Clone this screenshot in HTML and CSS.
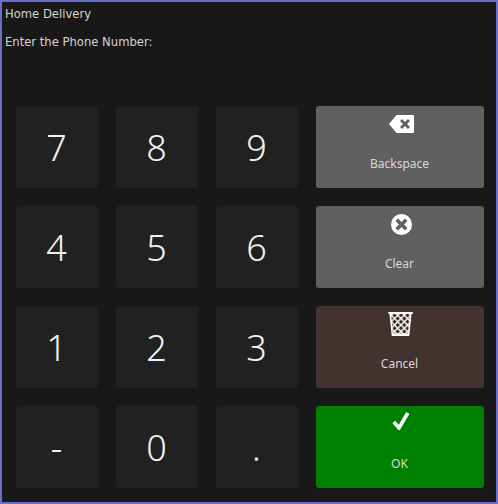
FILE: index.html
```html
<!DOCTYPE html>
<html lang="en">
<head>
<meta charset="utf-8">
<title>Home Delivery</title>
<link rel="stylesheet" href="styles.css">
</head>
<body>
<main class="dialog">
  <h1 class="title">Home Delivery</h1>
  <p class="prompt">Enter the Phone Number:</p>
  <div class="pad">
    <button class="key">7</button>
    <button class="key">8</button>
    <button class="key">9</button>
    <button class="action grey">
      <svg class="icon back" viewBox="0 0 25 18"><path fill="#fff" fill-rule="evenodd" d="M7.500 0H24a1 1 0 0 1 1 1V17a1 1 0 0 1-1 1H7.500L0 9ZM11 6 14 9 11 12 13 14 16 11 19 14 21 12 18 9 21 6 19 4 16 7 13 4Z"/></svg>
      <span>Backspace</span>
    </button>
    <button class="key">4</button>
    <button class="key">5</button>
    <button class="key">6</button>
    <button class="action grey">
      <svg class="icon clear" viewBox="0 0 21 21"><path fill="#fff" fill-rule="evenodd" d="M10.500 0a10.500 10.500 0 1 0 0 21 10.500 10.500 0 0 0 0-21ZM7 4.500 10.500 8 14 4.500 16.500 7 13 10.500 16.500 14 14 16.500 10.500 13 7 16.500 4.500 14 8 10.500 4.500 7Z"/></svg>
      <span>Clear</span>
    </button>
    <button class="key">1</button>
    <button class="key">2</button>
    <button class="key">3</button>
    <button class="action brown">
      <svg class="icon bin" viewBox="0 0 25 24">
        <defs>
          <pattern id="mesh" width="4.600" height="4.600" patternUnits="userSpaceOnUse" patternTransform="rotate(45)">
            <rect width="4.600" height="4.600" fill="#fff"/>
            <rect x="0.700" y="0.700" width="3.200" height="3.200" fill="#3a2a28"/>
          </pattern>
        </defs>
        <path fill="url(#mesh)" d="M2 1H23L21 23H4Z"/>
        <path fill="#fff" d="M0 0H25L24.500 2H0.500ZM1.500 2H3.200L5 23H3.600ZM21.800 2H23.500L21.400 23H20ZM3.800 21.500H21.200V24H3.800Z"/>
      </svg>
      <span>Cancel</span>
    </button>
    <button class="key">-</button>
    <button class="key">0</button>
    <button class="key">.</button>
    <button class="action green">
      <svg class="icon check" viewBox="0 0 18 18"><path fill="none" stroke="#fff" stroke-width="3.600" d="M1.800 10 7 16 15.800 1"/></svg>
      <span>OK</span>
    </button>
  </div>
</main>
</body>
</html>
```
FILE: styles.css
```css
* { box-sizing: border-box; }
html, body { margin: 0; padding: 0; }
body { background: #181818; }
.dialog {
  width: 498px;
  height: 504px;
  border: 2px solid #6a6fcb;
  background: #181818;
  color: #d4d4d4;
  font-family: "DejaVu Sans", sans-serif;
  font-size: 11.6px;
  line-height: 14px;
  opacity: 0.999;
}
.title { margin: 0; padding: 5px 0 0 3px; font: inherit; }
.prompt { margin: 14px 0 0 3px; }
.pad {
  display: grid;
  grid-template-columns: 82px 82px 82px 168px;
  grid-auto-rows: 82px;
  gap: 18px;
  margin: 57px 0 0 14px;
}
button {
  border: 0;
  border-radius: 3px;
  padding: 0;
  font-family: "Noto Sans", "Open Sans", sans-serif;
  color: #d8d8d8;
}
.key {
  background: #212121;
  font-size: 36px;
  font-weight: 300;
  font-family: "Noto Sans", sans-serif;
  color: #f2f2f2;
  padding-right: 1px;
}
.action {
  display: flex;
  flex-direction: column;
  align-items: center;
  position: relative;
  font-size: 12px;
  line-height: 16px;
  padding: 50px 1px 0 0;
}
.action span { display: block; }
.icon { position: absolute; }
.grey { background: #606060; }
.brown { background: #433230; }
.green { background: #008000; }
.back { left: 73px; top: 9px; width: 25px; height: 18px; }
.clear { left: 75px; top: 8px; width: 21px; height: 21px; }
.bin { left: 72px; top: 6px; width: 25px; height: 24px; }
.check { left: 76px; top: 6px; width: 18px; height: 18px; }
```
